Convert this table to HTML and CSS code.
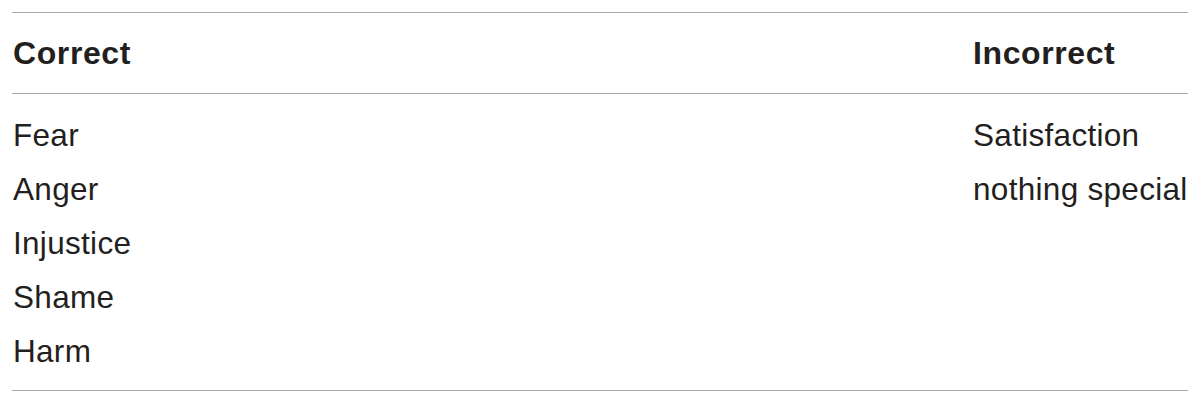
FILE: index.html
```html
<!DOCTYPE html>
<html>
<head>
<meta charset="utf-8">
<link rel="stylesheet" href="styles.css">
</head>
<body>
<div class="table">
  <div class="head">
    <div class="th">Correct</div>
    <div class="th">Incorrect</div>
  </div>
  <div class="body">
    <div class="col">
      <div class="td">Fear</div>
      <div class="td">Anger</div>
      <div class="td">Injustice</div>
      <div class="td">Shame</div>
      <div class="td">Harm</div>
    </div>
    <div class="col">
      <div class="td">Satisfaction</div>
      <div class="td">nothing special</div>
    </div>
  </div>
</div>
</body>
</html>
```
FILE: styles.css
```css
html, body {
  margin: 0;
  padding: 0;
  background: #ffffff;
}
body {
  padding: 12px 12px 0 12px;
  font-family: "Liberation Sans", Arial, sans-serif;
  color: #231f20;
}
.table {
  border-top: 1.5px solid #a7a7a7;
  border-bottom: 1.5px solid #a7a7a7;
}
.head {
  display: grid;
  grid-template-columns: 960px 1fr;
  padding: 20px 0 19px 0;
  border-bottom: 1.5px solid #a7a7a7;
}
.th {
  font-weight: bold;
  font-size: 32px;
  line-height: 41px;
  letter-spacing: 0.6px;
  padding-left: 1px;
  white-space: nowrap;
}
.body {
  display: grid;
  grid-template-columns: 960px 1fr;
  padding: 14px 0 12px 0;
}
.td {
  font-size: 31.5px;
  line-height: 54px;
  letter-spacing: 0.3px;
  padding-left: 1px;
  white-space: nowrap;
}
```
